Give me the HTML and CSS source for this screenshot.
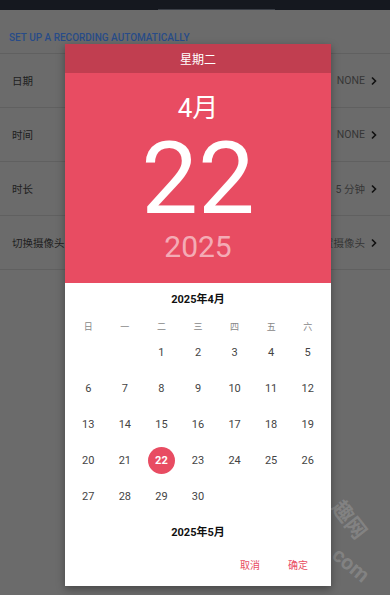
FILE: index.html
```html
<!DOCTYPE html>
<html lang="zh">
<head>
<meta charset="utf-8">
<title>Recording</title>
<link rel="stylesheet" href="styles.css">
</head>
<body>
<div class="page">
  <div class="topbar"><div class="tab-line"></div></div>
  <div class="section-title">SET UP A RECORDING AUTOMATICALLY</div>
  <div class="row"><span class="label">日期</span><span class="value">NONE</span><svg class="chev" viewBox="0 0 8 10"><path d="M2 1.5 L5.5 5 L2 8.5" /></svg></div>
  <div class="row"><span class="label">时间</span><span class="value">NONE</span><svg class="chev" viewBox="0 0 8 10"><path d="M2 1.5 L5.5 5 L2 8.5" /></svg></div>
  <div class="row"><span class="label">时长</span><span class="value">5 分钟</span><svg class="chev" viewBox="0 0 8 10"><path d="M2 1.5 L5.5 5 L2 8.5" /></svg></div>
  <div class="row"><span class="label">切换摄像头</span><span class="value">后置摄像头</span><svg class="chev" viewBox="0 0 8 10"><path d="M2 1.5 L5.5 5 L2 8.5" /></svg></div>
</div>

<div class="wm wm-a">趣网</div>
<div class="wm wm-b">.com</div>

<div class="dialog">
  <div class="dlg-head">星期二</div>
  <div class="dlg-hero">
    <div class="hero-month">4月</div>
    <div class="hero-day">22</div>
    <div class="hero-year">2025</div>
  </div>
  <div class="dlg-cal">
    <div class="cal-title">2025年4月</div>
    <div class="cal-grid weekdays">
      <span>日</span><span>一</span><span>二</span><span>三</span><span>四</span><span>五</span><span>六</span>
    </div>
    <div class="cal-grid days">
      <span></span><span></span><span>1</span><span>2</span><span>3</span><span>4</span><span>5</span>
      <span>6</span><span>7</span><span>8</span><span>9</span><span>10</span><span>11</span><span>12</span>
      <span>13</span><span>14</span><span>15</span><span>16</span><span>17</span><span>18</span><span>19</span>
      <span>20</span><span>21</span><span class="sel"><b>22</b></span><span>23</span><span>24</span><span>25</span><span>26</span>
      <span>27</span><span>28</span><span>29</span><span>30</span><span></span><span></span><span></span>
    </div>
    <div class="cal-title next">2025年5月</div>
    <div class="actions">
      <span class="btn">取消</span>
      <span class="btn">确定</span>
    </div>
  </div>
</div>
</body>
</html>
```

FILE: styles.css
```css
* { box-sizing: border-box; }
html, body {
  margin: 0;
  padding: 0;
  width: 390px;
  height: 595px;
  overflow: hidden;
  background: #6b6b6b;
  font-family: Roboto, "Noto Sans CJK SC", sans-serif;
}
.page {
  width: 390px;
  height: 595px;
  background: #6b6b6b;
}
.topbar {
  height: 10px;
  background: #15181f;
  position: relative;
}
.tab-line {
  position: absolute;
  left: 158px;
  width: 117px;
  bottom: 0;
  height: 1px;
  background: #3a3e46;
}
.section-title {
  height: 44px;
  padding: 21px 0 0 9px;
  line-height: 14px;
  font-size: 10px;
  font-weight: 500;
  color: #284b88;
  border-bottom: 1px solid #606060;
}
.row {
  height: 54px;
  display: flex;
  align-items: center;
  padding: 0 12px 0 12px;
  border-bottom: 1px solid #606060;
}
.row .label {
  flex: 1;
  font-size: 10.5px;
  color: #202020;
}
.row .value {
  font-size: 10.5px;
  color: #363636;
}
.chev {
  width: 8px;
  height: 10px;
  margin-left: 5px;
}
.chev path {
  fill: none;
  stroke: #111;
  stroke-width: 1.6;
}
.wm {
  position: absolute;
  color: rgba(255,255,255,0.17);
  font-weight: 700;
  font-size: 21px;
  line-height: 24px;
  white-space: nowrap;
  transform-origin: center;
}
.wm-a {
  left: 328px;
  top: 508px;
  transform: rotate(52deg);
}
.wm-b {
  left: 325px;
  top: 551px;
  transform: rotate(40deg);
}
.dialog {
  position: absolute;
  left: 65px;
  top: 44px;
  width: 266px;
  height: 542px;
  background: #fff;
  box-shadow: 0 3px 8px rgba(0,0,0,0.35);
  display: flex;
  flex-direction: column;
}
.dlg-head {
  height: 29px;
  background: #c13e50;
  color: #fff;
  font-size: 12px;
  display: flex;
  align-items: center;
  justify-content: center;
}
.dlg-hero {
  height: 210px;
  background: #e84c62;
  color: #fff;
  display: flex;
  flex-direction: column;
  align-items: center;
  padding-top: 20px;
}
.hero-month {
  font-size: 26px;
  line-height: 30px;
}
.hero-day {
  font-size: 101px;
  line-height: 106px;
  margin-top: 3px;
  margin-bottom: -3px;
}
.hero-year {
  font-size: 30px;
  line-height: 36px;
  color: rgba(255,255,255,0.55);
}
.dlg-cal {
  flex: 1;
  display: flex;
  flex-direction: column;
  padding: 7px 5px 0 5px;
}
.cal-title {
  text-align: center;
  font-size: 11px;
  font-weight: 700;
  line-height: 20px;
  color: #111;
}
.cal-title.next {
  margin-top: 9px;
}
.cal-grid {
  display: grid;
  grid-template-columns: repeat(7, 1fr);
}
.weekdays {
  margin-top: 8px;
  height: 16px;
}
.weekdays span {
  display: flex;
  align-items: center;
  justify-content: center;
  font-size: 9px;
  color: #888;
}
.days span {
  height: 36px;
  display: flex;
  align-items: center;
  justify-content: center;
  font-size: 11px;
  color: #444;
}
.days .sel b {
  width: 27px;
  height: 27px;
  border-radius: 50%;
  background: #e84c62;
  color: #fff;
  font-weight: 700;
  display: flex;
  align-items: center;
  justify-content: center;
}
.actions {
  margin-top: 13px;
  display: flex;
  justify-content: flex-end;
  padding-right: 4px;
}
.btn {
  width: 48px;
  line-height: 20px;
  text-align: center;
  font-size: 10px;
  color: #e84c62;
}
```
